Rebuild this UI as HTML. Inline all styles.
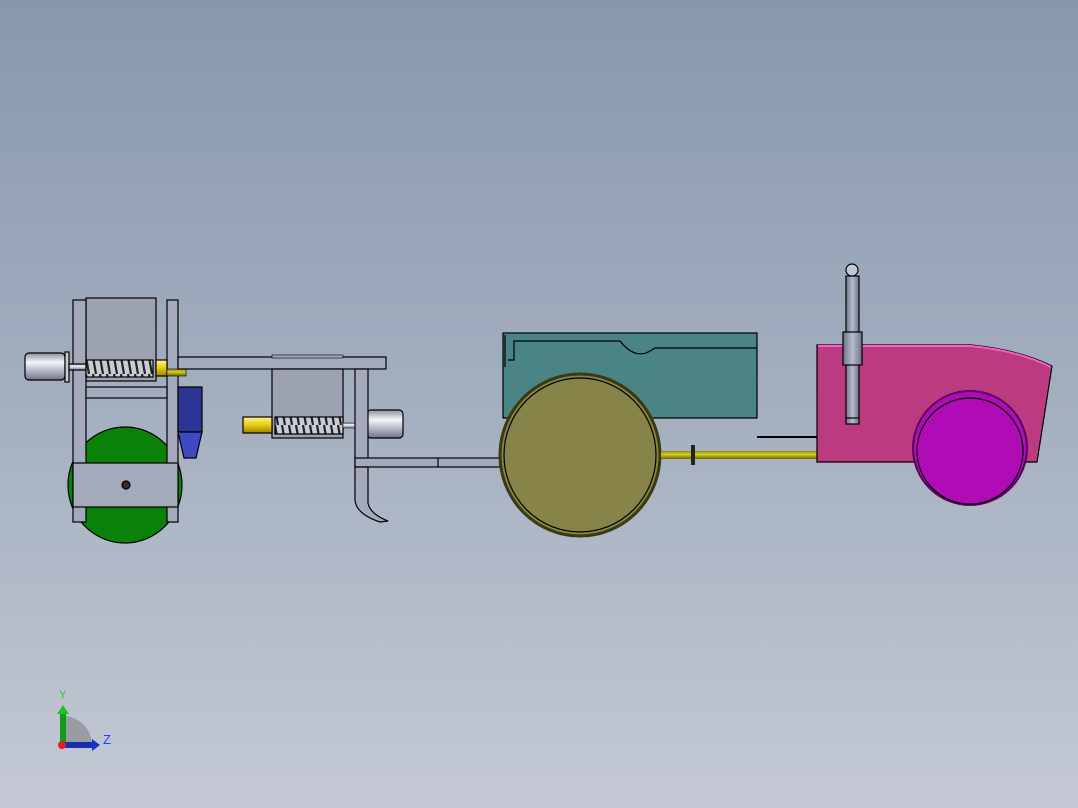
<!DOCTYPE html>
<html><head><style>
html,body{margin:0;padding:0;width:1078px;height:808px;overflow:hidden}
body{background:linear-gradient(#8898ac 0%,#a4afbf 50%,#c4c9d4 100%)}
svg{position:absolute;left:0;top:0}
</style></head><body>
<svg width="1078" height="808" viewBox="0 0 1078 808" stroke="#000" stroke-width="1.2">
<defs>
<linearGradient id="cyl" x1="0" y1="0" x2="0" y2="1"><stop offset="0" stop-color="#8c909c"/><stop offset=".35" stop-color="#f4f6fa"/><stop offset="1" stop-color="#70748a"/></linearGradient>
<linearGradient id="yel" x1="0" y1="0" x2="0" y2="1"><stop offset="0" stop-color="#8a8410"/><stop offset=".4" stop-color="#d6d020"/><stop offset="1" stop-color="#6e6a08"/></linearGradient>
<linearGradient id="gy" x1="0" y1="0" x2="0" y2="1"><stop offset="0" stop-color="#fff48a"/><stop offset=".5" stop-color="#e8cc10"/><stop offset="1" stop-color="#9a8400"/></linearGradient>
<linearGradient id="col" x1="0" y1="0" x2="1" y2="0"><stop offset="0" stop-color="#6e7486"/><stop offset=".5" stop-color="#b6bccc"/><stop offset="1" stop-color="#6e7486"/></linearGradient>
<pattern id="spr" width="7" height="17" patternUnits="userSpaceOnUse"><rect width="7" height="17" fill="#c8ccd6" stroke="none"/><path d="M2 0 L5 17" stroke="#222" stroke-width="2.2"/></pattern>
</defs>
<ellipse cx="125" cy="485" rx="57" ry="58" fill="#0a820a"/>
<rect x="86" y="298" width="70" height="83" fill="#9ca2b0"/>
<rect x="73" y="300" width="13" height="222" fill="#a4a9bb"/>
<rect x="167" y="300" width="11" height="222" fill="#a4a9bb"/>
<rect x="86" y="387" width="81" height="11" fill="#a4a9bb"/>
<rect x="25" y="353" width="40" height="27" rx="4" fill="url(#cyl)"/>
<rect x="65" y="352" width="4" height="30" fill="#c8ccd6"/>
<rect x="69" y="364" width="17" height="6" fill="url(#cyl)"/>
<rect x="86" y="360" width="67" height="17" fill="url(#spr)"/>
<rect x="156" y="360" width="11" height="16" fill="url(#gy)"/>
<rect x="167" y="369" width="19" height="7" fill="url(#yel)" stroke-width=".6"/>
<rect x="178" y="357" width="208" height="12" fill="#a4a9bb"/>
<rect x="73" y="463" width="105" height="44" fill="#a4a9bb"/>
<circle cx="126" cy="485" r="4" fill="#3a2a20"/>
<rect x="178" y="387" width="24" height="45" fill="#2e3494"/>
<polygon points="178,432 202,432 196,458 184,458" fill="#3e48c0"/>
<rect x="272" y="355" width="71" height="3" fill="#a4a9bb" stroke-width=".6"/>
<rect x="272" y="369" width="71" height="69" fill="#9ca2b0"/>
<rect x="243" y="417" width="29" height="16" fill="url(#gy)"/>
<rect x="275" y="417" width="68" height="17" fill="url(#spr)"/>
<rect x="343" y="423" width="24" height="5" fill="url(#cyl)" stroke-width=".5"/>
<rect x="367" y="410" width="36" height="28" rx="4" fill="url(#cyl)"/>
<rect x="355" y="369" width="13" height="98" fill="#a4a9bb"/>
<rect x="355" y="458" width="145" height="9" fill="#a4a9bb"/>
<line x1="438" y1="458" x2="438" y2="467"/>
<path d="M355 467 L368 467 L368 503 Q370 514 388 521 L380 522 Q356 514 355 500 Z" fill="#a4a9bb"/>
<rect x="503" y="333" width="254" height="85" fill="#4a8484"/>
<path d="M505 367 L505 335 M508 360 L514 360 L514 341 L620 341 Q635 360 650 351 L655 348 L757 348" fill="none"/>
<ellipse cx="580" cy="455" rx="80" ry="81" fill="#868448" stroke="#3a3a10" stroke-width="3"/>
<ellipse cx="580" cy="455" rx="76" ry="77" fill="none"/>
<rect x="661" y="451" width="156" height="8" fill="url(#yel)" stroke="none"/>
<rect x="691" y="445" width="4" height="20" fill="#222" stroke="none"/>
<line x1="757" y1="437" x2="817" y2="437" stroke-width="2"/>
<path d="M817 345 L971 345 Q1020 350 1052 366 L1037 462 L817 462 Z" fill="#bb3a80"/>
<path d="M818 346 L971 346 Q1020 351 1051 367" fill="none" stroke="#ff5cc4" stroke-width="2"/>
<ellipse cx="970" cy="448" rx="57" ry="57" fill="#b00cb6" stroke="#5a0060" stroke-width="2"/>
<ellipse cx="970" cy="451" rx="53" ry="53" fill="none"/>
<rect x="846" y="276" width="13" height="148" fill="url(#col)"/>
<rect x="843" y="332" width="19" height="33" fill="url(#col)"/>
<circle cx="852" cy="270" r="6" fill="#c4c8d4"/>
<line x1="846" y1="418" x2="859" y2="418"/>
<path d="M63 745 L63 716 A29 29 0 0 1 92 745 Z" fill="#9a9ca4" stroke="none"/>
<rect x="60" y="712" width="6" height="33" fill="#149a14" stroke="none"/>
<polygon points="57,714 63,705 69,714" fill="#20c020" stroke="none"/>
<rect x="63" y="742" width="30" height="6" fill="#1830b0" stroke="none"/>
<polygon points="92,739 100,745 92,751" fill="#1830d0" stroke="none"/>
<circle cx="62" cy="745" r="4" fill="#e02020" stroke="none"/>
<text x="59" y="698" font-family="Liberation Sans" font-size="11" fill="#20d020" stroke="none">Y</text>
<text x="103" y="744" font-family="Liberation Sans" font-size="13" fill="#2040ff" stroke="none">Z</text>
</svg>
</body></html>
